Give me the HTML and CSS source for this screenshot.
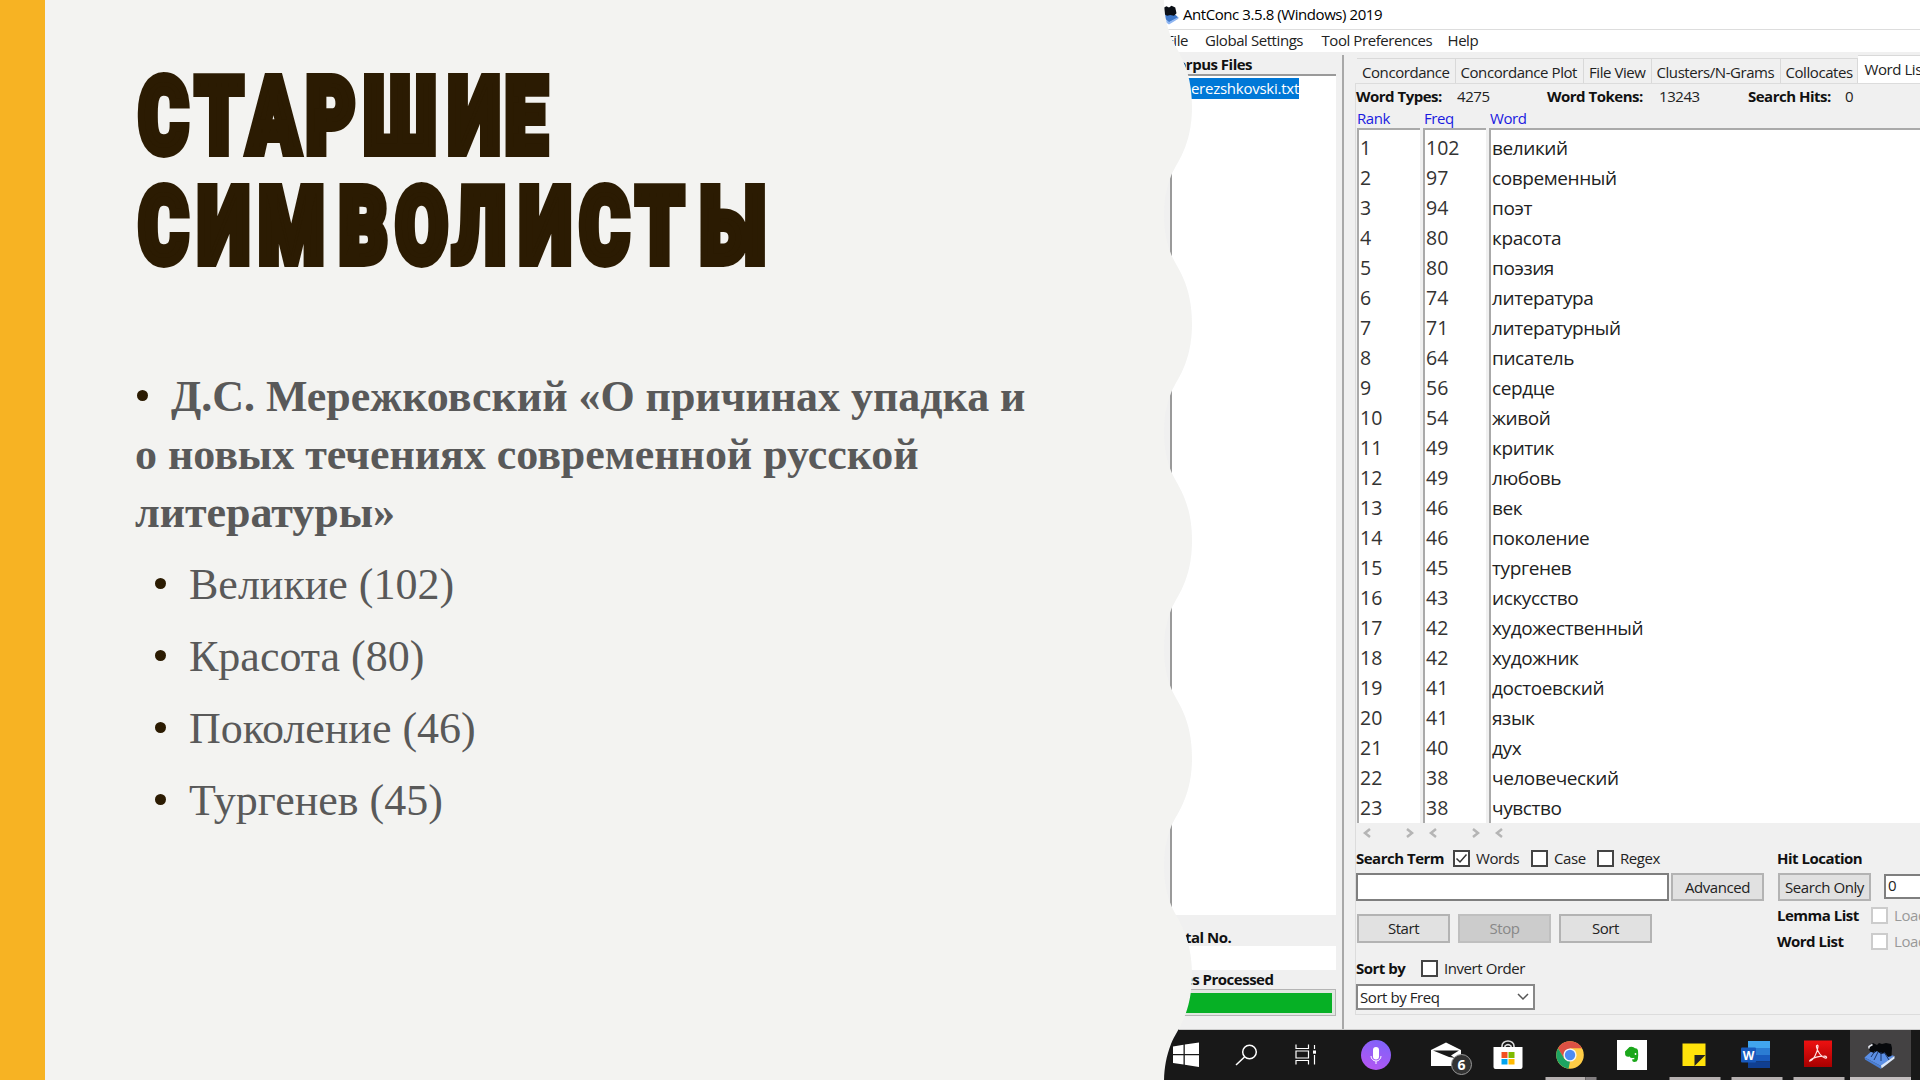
FILE: index.html
```html
<!DOCTYPE html>
<html lang="ru">
<head>
<meta charset="utf-8">
<title>Старшие символисты</title>
<link rel="stylesheet" href="styles.css">
</head>
<body>
<main class="slide">
  <section class="content">
    <h1 class="title">
      <svg viewBox="0 0 680 220" width="680" height="220" role="img">
        <g transform="scale(.72 1)">
          <text y="88.800" x="39.500 117 192.4 271.500 368 471 543">СТАРШИЕ</text>
          <text y="198.800" x="39.500 123.2 217 317 398 478 570 652 729 830">СИМВОЛИСТЫ</text>
        </g>
      </svg>
    </h1>
    <p class="lead"><i class="dot"></i>Д.С. Мережковский «О причинах упадка и<br>о новых течениях современной русской<br>литературы»</p>
    <ul class="terms">
      <li>Великие (102)</li>
      <li>Красота (80)</li>
      <li>Поколение (46)</li>
      <li>Тургенев (45)</li>
    </ul>
  </section>

  <section class="shot">
    <header class="titlebar">
      <svg class="appicon" viewBox="0 0 32 30"><path d="M3 14 20 9 31 19 16 27z" fill="#3f78c9"/><path d="M3 17 16 26 31 18v3L16 30 3 21z" fill="#8fb6f2"/><path d="M6 4l6-3 4 2 4-3 6 3 2 9-4 4-6-1-5 1-6-3z" fill="#0b0f16"/></svg>
      <span>AntConc 3.5.8 (Windows) 2019</span>
    </header>
    <nav class="menu"><span class="first-item">File</span><span>Global Settings</span><span>Tool Preferences</span><span>Help</span></nav>

    <div class="body">
      <aside class="files">
        <b class="h-files">Corpus Files</b>
        <div class="listbox"><span class="sel">merezshkovski.txt</span></div>
        <b class="h-total">Total No.</b>
        <div class="count"></div>
        <b class="h-proc">Files Processed</b>
        <div class="progress"><div></div></div>
      </aside>

      <div class="main">
        <div class="tabs"><span>Concordance</span><span>Concordance Plot</span><span>File View</span><span>Clusters/N-Grams</span><span>Collocates</span><span class="on">Word List</span></div>
        <div class="pane">
          <div class="stats"><b>Word Types:</b><span>4275</span><b>Word Tokens:</b><span>13243</span><b>Search Hits:</b><span>0</span></div>
          <div class="heads"><span>Rank</span><span>Freq</span><span>Word</span></div>
          <div class="table">
            <ol class="col"><li>1<li>2<li>3<li>4<li>5<li>6<li>7<li>8<li>9<li>10<li>11<li>12<li>13<li>14<li>15<li>16<li>17<li>18<li>19<li>20<li>21<li>22<li>23</ol>
            <ol class="col"><li>102<li>97<li>94<li>80<li>80<li>74<li>71<li>64<li>56<li>54<li>49<li>49<li>46<li>46<li>45<li>43<li>42<li>42<li>41<li>41<li>40<li>38<li>38</ol>
            <ol class="col words"><li>великий<li>современный<li>поэт<li>красота<li>поэзия<li>литература<li>литературный<li>писатель<li>сердце<li>живой<li>критик<li>любовь<li>век<li>поколение<li>тургенев<li>искусство<li>художественный<li>художник<li>достоевский<li>язык<li>дух<li>человеческий<li>чувство</ol>
          </div>
          <div class="scrolls">
            <svg viewBox="0 0 62 20"><path d="M13 6 8 10l5 4M50 6l5 4-5 4"/></svg>
            <svg viewBox="0 0 62 20"><path d="M13 6 8 10l5 4M50 6l5 4-5 4"/></svg>
            <svg viewBox="0 0 62 20"><path d="M13 6 8 10l5 4"/></svg>
          </div>
          <div class="controls">
            <div class="left">
              <div class="checks"><b>Search Term</b><svg class="box" viewBox="0 0 13 13"><path d="M1.500 6.500 5 10 11.500 2.500"/></svg><span>Words</span><i class="box"></i><span>Case</span><i class="box"></i><span>Regex</span></div>
              <div class="query"><div class="field"></div><div class="btn">Advanced</div></div>
              <div class="actions"><div class="btn">Start</div><div class="btn off">Stop</div><div class="btn">Sort</div></div>
              <div class="sortrow"><b>Sort by</b><i class="box"></i><span>Invert Order</span></div>
              <div class="combo"><span>Sort by Freq</span><svg viewBox="0 0 12 8"><path d="M1 1l5 5 5-5"/></svg></div>
            </div>
            <div class="right">
              <b class="hit">Hit Location</b>
              <div class="hitrow"><div class="btn">Search Only</div><div class="field num">0</div></div>
              <div class="load first"><b>Lemma List</b><i class="box dim"></i><span>Loaded</span></div>
              <div class="load"><b>Word List</b><i class="box dim"></i><span>Loaded</span></div>
            </div>
          </div>
        </div>
      </div>
    </div>

    <footer class="taskbar">
      <div class="t"><svg viewBox="0 0 62 50"><path d="M9 16.500 19.500 14.800V24H9zM20.800 14.600 35 12.500V24H20.800zM9 25.300H19.500V34.500L9 33zM20.800 25.300H35V37L20.800 34.800z" fill="#fff"/></svg></div>
      <div class="t"><svg viewBox="0 0 62 50"><g fill="none" stroke="#fff" stroke-width="1.500"><circle cx="35.500" cy="22" r="6.800"/><path d="M30.500 27 22 35"/></g></svg></div>
      <div class="t"><svg viewBox="0 0 62 50"><g fill="none" stroke="#fff" stroke-width="1.200"><path d="M20 14.500v4h12.500v-4M20 34.500v-4h12.500v4M20 21h12.500v7H20zM38.500 15v4M38.500 25v9.500"/></g><path d="M37 20.500h3v3.200h-3z" fill="#fff"/></svg></div>
      <div class="t"><svg viewBox="0 0 62 50"><defs><linearGradient id="mic" x1=".3" y1="1" x2=".7" y2="0"><stop offset="0" stop-color="#b455f2"/><stop offset="1" stop-color="#7f63fa"/></linearGradient></defs><circle cx="31" cy="25" r="15" fill="url(#mic)"/><rect x="28" y="17" width="6" height="12.500" rx="3" fill="#fff"/><path d="M26 26a5 5 0 0 0 10 0M31 31v3" fill="none" stroke="#fff" stroke-width="1"/></svg></div>
      <div class="t"><svg viewBox="0 0 62 50"><path d="M16 20 31 12.500 46 20V36H16z" fill="#fff"/><path d="M18 20.500H44L36 25.500 40 28 34 27z" fill="#181818"/><circle cx="46.500" cy="34.500" r="10" fill="#333" stroke="#999"/><text x="46.500" y="40" class="badge">6</text></svg></div>
      <div class="t"><svg viewBox="0 0 62 50"><path d="M25 18v-2a6 5 0 0 1 12 0v2M28 18v-2a4.500 4.500 0 0 1 6 0v2" fill="none" stroke="#ddd" stroke-width="1.600"/><path d="M16.500 17h29v20q0 2-2 2h-25q-2 0-2-2z" fill="#fff"/><path d="M24.500 22h6v6h-6z" fill="#f25022"/><path d="M31.500 22h6v6h-6z" fill="#7fba00"/><path d="M24.500 29h6v5.500h-6z" fill="#00a4ef"/><path d="M31.500 29h6v5.500h-6z" fill="#ffb900"/></svg></div>
      <div class="t"><svg viewBox="0 0 62 50"><circle cx="31" cy="25" r="13.800" fill="#ffcd46"/><path d="M31 18.200H43.100A13.800 13.800 0 0 0 19 18.200L25 28.500z" fill="#dd5144"/><path d="M19 18.200 25.200 28.500 31 31.500 29.500 38.700A13.800 13.800 0 0 1 19 18.200z" fill="#1da462"/><circle cx="31" cy="25" r="6.600" fill="#f5f5f5"/><circle cx="31" cy="25" r="5.200" fill="#4c8bf5"/><path d="M6.500 47h40v3h-40z" fill="#b5b0b0"/><path d="M47 47h10.500v3H47z" fill="#827e80"/></svg></div>
      <div class="t"><svg viewBox="0 0 62 50"><path d="M16 10h30v30H16z" fill="#fff"/><path d="M24 21.500 28.500 17q4-.8 5.500 1.300 2.500-.2 3 2.200.6 5-.2 9-.6 2.500-3.500 2.500-2.500-.3-2-2.800h2v-1.500q-4 1-4.500-1.200Q25 27.500 24.200 25z" fill="#1ba71b"/><circle cx="34.500" cy="24" r=".9" fill="#fff"/></svg></div>
      <div class="t"><svg viewBox="0 0 62 50"><path d="M19.500 13.500h23v22.500h-23z" fill="#ffe20a"/><path d="M31.500 25h11L31.500 36z" fill="#222"/><path d="M6.500 47h51v3h-51z" fill="#b5b0b0"/></svg></div>
      <div class="t"><svg viewBox="0 0 62 50"><path d="M23 11h22v7H23z" fill="#41a5ee"/><path d="M23 18h22v7H23z" fill="#2b7cd3"/><path d="M23 25h22v6.500H23z" fill="#185abd"/><path d="M23 31.500h22V38H23z" fill="#103f91"/><rect x="16" y="17.500" width="15" height="15" rx="1" fill="#185abd"/><text x="23.500" y="29.500" class="wd">W</text><path d="M6.500 47h51v3h-51z" fill="#b5b0b0"/></svg></div>
      <div class="t"><svg viewBox="0 0 62 50"><defs><linearGradient id="pdf" x1="0" y1="0" x2="0" y2="1"><stop offset="0" stop-color="#ee1111"/><stop offset="1" stop-color="#a80000"/></linearGradient></defs><path d="M17 10.500h28v26.500H17z" fill="url(#pdf)"/><path d="M23 31c3-.5 7.500-8 8-14.500.2-2-2-1.500-1.500.5 1 5 5 10 8.500 11 2.500.5 2-2-1-1.800-5 .2-10 1.300-13 3.300-1.500 1-1.500 1.800-1 1.500z" fill="none" stroke="#ffe5e5" stroke-width="1.200"/><path d="M6.500 47h51v3h-51z" fill="#b5b0b0"/></svg></div>
      <div class="t active"><svg viewBox="0 0 62 50"><path d="M14.500 27.500 23 20 44.500 26 31 36z" fill="#5b8fe6"/><path d="M31 35.500 44.500 26v2.500L31.500 38.500z" fill="#dbe8fb"/><path d="M14.500 27.500 31 36v3L15 29.500z" fill="#4a7fd6"/><path d="M18 16l5-3 4 2 2-2 3 1 4-1 5 1 1 4-.5 8-3.500 1-3-4-4 1-4-3-3 2-4-1.500z" fill="#07090c"/><path d="M28 22l-4 8M31 22v9M34 22l5 8M25 21l-4 6" stroke="#1b3566" fill="none"/><path d="M19 18.500v-2l3.500-2" stroke="#e4e6ee" stroke-width="1.600" fill="none"/><path d="M0 47h62v3H0z" fill="#c4bfc0"/></svg></div>
    </footer>
  </section>
</main>
</body>
</html>
```
FILE: styles.css
```css
* { box-sizing: border-box; }
body { margin: 0; background: #f3f3f1; }
.slide { display: flex; width: 1920px; height: 1080px; overflow: hidden; background: #f3f3f1; border-left: 45px solid #f7b323; }

/* left column */
.content { width: 1119px; padding: 63px 0 0 85px; flex: none; }
.title { margin: 0 0 0 5px; height: 220px; }
.title svg { display: block; overflow: visible; }
.title text { font: 900 104px Roboto, sans-serif; text-anchor: middle; fill: #2b1b02; stroke: #2b1b02; stroke-width: 8.500px; vector-effect: non-scaling-stroke; }
.lead { margin: 85px 0 0 5px; font: bold 44px/58px "Liberation Serif", serif; color: #595959; letter-spacing: -.03px; white-space: nowrap; }
.dot, .terms li::before { display: inline-block; width: 11px; height: 11px; border-radius: 50%; background: #2b1b02; vertical-align: 10px; }
.dot { margin: 0 23px 0 2px; }
.terms { list-style: none; margin: 7px 0 0 25px; padding: 0; font: 44px/72px "Liberation Serif", serif; color: #595959; }
.terms li::before { content: ""; margin-right: 23px; }

/* screenshot of the concordancer with a wavy left edge */
.shot { width: 756px; flex: none; display: flex; flex-direction: column; overflow: hidden; background: #f0f0f0; font: 15px/20px "Open Sans", "Noto Sans", sans-serif; letter-spacing: -.43px; color: #222; white-space: nowrap;
  clip-path: path("M0 -2c0 14 2 26 7 39c5 13 21 29 21 69.500c0 40.500-16 56.500-21 69.500c-5 13-7 25-7 39c0 14 2 26 7 39c5 13 21 29 21 69.500c0 40.500-16 56.500-21 69.500c-5 13-7 25-7 39c0 14 2 26 7 39c5 13 21 29 21 69.500c0 40.500-16 56.500-21 69.500c-5 13-7 25-7 39c0 14 2 26 7 39c5 13 21 29 21 69.500c0 40.500-16 56.500-21 69.500c-5 13-7 25-7 39c0 14 2 26 7 39c5 13 21 29 21 69.500c0 40.500-16 56.500-21 69.500c-5 13-7 25-7 39H756V-2z"); }
.shot b { color: #111; letter-spacing: -.5px; }
.titlebar { height: 30px; background: #fff; border-bottom: 1px solid #ddd; display: flex; align-items: center; color: #000; flex: none; }
.titlebar span { height: 22px; }
.appicon { width: 20px; height: 20px; margin: 0 4px 0 -5px; }
.menu { height: 22px; line-height: 21px; background: #fff; display: grid; grid-template-columns: 41px 116.500px 126px 60px; align-items: start; flex: none; }
.first-item { padding-left: 2px; }
.body { display: flex; height: 977px; flex: none; }
.files { width: 180px; border-right: 2px solid #a8a8a8; margin-top: 3px; padding-left: 6px; display: flex; flex-direction: column; flex: none; }
.files b { margin-left: -2px; }
.h-files { height: 19px; line-height: 19px; }
.listbox { width: 166px; height: 841px; background: #fff; border-left: 2px solid #9a9a9a; border-top: 2px solid #9a9a9a; padding-top: 2px; }
.sel { display: block; width: 127px; height: 21px; line-height: 21px; background: #0078d7; color: #fff; text-align: right; letter-spacing: -.25px; }
.h-total { padding-top: 12px; height: 31px; }
.count { width: 166px; height: 24px; background: #fff; }
.h-proc { height: 19px; line-height: 19px; }
.progress { width: 166px; height: 27px; border: 1px solid #b5b5b5; padding: 3px; background: #e0e8e0; }
.progress div { height: 20px; background: #06b025; }
.main { flex: 1; padding: 3px 0 0 11px; min-width: 0; }
.tabs { display: grid; grid-template-columns: 98.500px 128.500px 67.500px 129px 77px 1fr; height: 28px; align-items: end; padding-left: 2px; }
.tabs span { height: 25px; line-height: 26px; border: 1px solid #d9d9d9; border-width: 1px 1px 0 0; padding-left: 5px; }
.tabs .on { height: 28px; background: #fff; line-height: 27px; padding-left: 7px; border-right: 0; }
.pane { height: 932px; border: 1px solid #dcdcdc; border-right: 0; }
.stats { display: grid; grid-template-columns: 101px 90px 112px 89px 97px 60px; height: 25px; line-height: 24px; }
.heads { display: grid; grid-template-columns: 67px 66px 100px; color: #1a1ae0; height: 19px; line-height: 18px; padding-left: 1px; }
.table { display: flex; gap: 3px; height: 695px; padding-left: 1px; }
.col { list-style: none; margin: 0; padding: 3px 0 0 1px; width: 63px; background: #fff; border-left: 2px solid #aaa; border-top: 2px solid #aaa; font-size: 19.500px; letter-spacing: 0; line-height: 30px; color: #333; }
.words { flex: 1; padding-left: 1px; color: #222; font-size: 19px; letter-spacing: -.4px; }
.scrolls { display: flex; gap: 4px; height: 20px; padding-left: 1px; }
.scrolls svg { width: 62px; fill: none; stroke: #b5b5b5; stroke-width: 2.500; }
.controls { display: flex; height: 168px; }
.left { width: 421px; padding-top: 6px; flex: none; }
.right { flex: 1; padding-top: 6px; min-width: 0; }
.checks, .sortrow, .load { display: grid; align-items: center; height: 20px; line-height: 18px; }
.checks > *, .sortrow > *, .load > * { margin-top: -2px; }
.checks .box, .sortrow .box, .load .box { margin-top: -1px; }
.checks { grid-template-columns: 97px 23px 55px 23px 43px 23px 60px; }
.sortrow { grid-template-columns: 65px 23px 100px; margin-top: 16px; }
.box { width: 17px; height: 17px; border: 2px solid #444; background: #fff; fill: none; stroke: #333; stroke-width: 1.500; }
.dim { border-color: #ccc; }
.query { display: flex; gap: 2px; margin-top: 4px; }
.field { width: 313px; height: 28px; border: 2px solid #7f7f7f; background: #fff; flex: none; }
.btn { width: 93px; height: 28px; border: 2px solid #b3b3b3; background: #e1e1e1; display: flex; justify-content: center; align-items: center; flex: none; }
.off { background: #ccc; color: #888; border-color: #bfbfbf; }
.actions { display: flex; gap: 8px; margin: 13px 0 0 1px; }
.actions .btn { height: 29px; padding-bottom: 1px; }
.combo { margin-top: 5px; width: 179px; height: 26px; border: 2px solid #888; background: #fff; display: flex; align-items: center; justify-content: space-between; padding: 0 4px 0 2px; }
.combo svg { width: 12px; fill: none; stroke: #555; stroke-width: 1.500; }
.hit { display: block; height: 20px; line-height: 18px; }
.hitrow { display: flex; gap: 13px; padding-left: 1px; margin-top: 4px; }
.num { height: 25px; line-height: 19px; padding-left: 2px; margin-top: 1px; }
.load { grid-template-columns: 94px 23px 60px; height: 26px; color: #999; }
.first { margin-top: 2px; }
.taskbar { height: 51px; background: #181818; border-top: 1px solid #ccc; flex: none; display: grid; grid-template-columns: 50px 62px 69px 70px 61.500px 62px 62.500px 61.500px 62px 62.500px 63px 61px; letter-spacing: 0; }
.t { height: 50px; min-width: 0; }
.t svg { display: block; width: 62px; height: 50px; }
.active { background: #444243; overflow: hidden; }
.badge { font: bold 14px "Open Sans", sans-serif; fill: #fff; text-anchor: middle; }
.wd { font: bold 12px "Open Sans", sans-serif; fill: #fff; text-anchor: middle; }
```
